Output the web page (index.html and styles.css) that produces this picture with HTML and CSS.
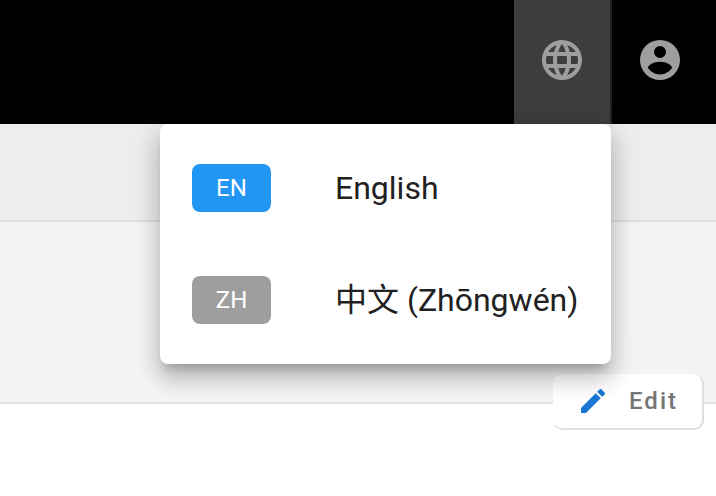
FILE: index.html
```html
<!DOCTYPE html>
<html lang="en">
  <head>
    <meta charset="UTF-8" />
    <meta name="viewport" content="width=device-width, initial-scale=1.0" />
    <title>Language menu</title>
    <link rel="stylesheet" href="styles.css">
  </head>
  <body>
    <header class="app-bar">
      <button type="button" class="bar-button active" aria-label="Language" aria-expanded="true">
        <svg class="bar-icon" viewBox="0 0 24 24">
          <path d="M16.36 14c.08-.66.14-1.32.14-2s-.06-1.34-.14-2h3.38c.16.64.26 1.31.26 2s-.1 1.36-.26 2m-5.15 5.56c.6-1.11 1.06-2.31 1.38-3.56h2.95a8.03 8.03 0 0 1-4.33 3.56M14.34 14H9.66c-.1-.66-.16-1.32-.16-2s.06-1.35.16-2h4.68c.09.65.16 1.32.16 2s-.07 1.34-.16 2M12 19.96c-.83-1.2-1.5-2.53-1.91-3.96h3.82c-.41 1.43-1.08 2.76-1.91 3.96M8 8H5.08A7.92 7.92 0 0 1 9.4 4.44C8.8 5.55 8.35 6.75 8 8m-2.92 8H8c.35 1.25.8 2.45 1.4 3.56A8 8 0 0 1 5.08 16m-.82-2C4.1 13.36 4 12.69 4 12s.1-1.36.26-2h3.38c-.08.66-.14 1.32-.14 2s.06 1.34.14 2M12 4.03c.83 1.2 1.5 2.54 1.91 3.97h-3.82c.41-1.43 1.08-2.77 1.91-3.97M18.92 8h-2.95a15.7 15.7 0 0 0-1.38-3.56c1.84.63 3.37 1.9 4.33 3.56M12 2C6.47 2 2 6.5 2 12a10 10 0 0 0 10 10 10 10 0 0 0 10-10A10 10 0 0 0 12 2" />
        </svg>
      </button>
      <button type="button" class="bar-button" aria-label="Account">
        <svg class="bar-icon" viewBox="0 0 24 24">
          <path fill-rule="evenodd" d="M12 2a10 10 0 1 0 0 20 10 10 0 0 0 0-20M12 5a3 3 0 1 1 0 6 3 3 0 0 1 0-6M12 12.9c3.3 0 6 1.6 6 3.1-1.3 1.9-3.5 3.2-6 3.2S7.3 17.9 6 16c0-1.5 2.7-3.1 6-3.1" />
        </svg>
      </button>
      <ul class="language-menu">
        <li>
          <button type="button" class="language">
            <span class="chip selected">EN</span>
            <span>English</span>
          </button>
        </li>
        <li>
          <button type="button" class="language">
            <span class="chip">ZH</span>
            <span lang="zh">中文 (Zhōngwén)</span>
          </button>
        </li>
      </ul>
    </header>
    <div class="sub-bar"></div>
    <main class="panel">
      <button type="button" class="edit-button">
        <svg class="edit-icon" viewBox="0 0 24 24">
          <path d="M20.71 7.04c.39-.39.39-1.04 0-1.41l-2.34-2.34c-.37-.39-1.02-.39-1.41 0l-1.84 1.83 3.75 3.75M3 17.25V21h3.75L17.81 9.93l-3.75-3.75z" />
        </svg>
        Edit
      </button>
    </main>
  </body>
</html>
```

FILE: styles.css
```css
body {
  min-height: 100vh;
  margin: 0;
  background: #fff;
  font-family: Roboto, "Noto Sans CJK SC", sans-serif;
}

button {
  border: 0;
  cursor: pointer;
  font-family: inherit;
}

.app-bar {
  position: relative;
  z-index: 2;
  display: flex;
  justify-content: flex-end;
  height: 124px;
  padding-right: 8px;
  background: #000;
}

.bar-button {
  box-sizing: content-box;
  display: flex;
  align-items: center;
  justify-content: center;
  width: 96px;
  padding: 0 0 4px;
  height: 120px;
  background: none;
}

.bar-button.active {
  background: #3d3d3d;
  border-right: 2px solid #222;
}

.bar-icon {
  width: 48px;
  height: 48px;
  fill: #9e9e9e;
}

.language-menu {
  position: absolute;
  top: 100%;
  right: 105px;
  min-width: 451px;
  margin: 0;
  padding: 8px 0;
  list-style: none;
  background: #fff;
  border-radius: 8px;
  box-shadow:
    0 10px 10px -6px rgba(0, 0, 0, 0.2),
    0 16px 20px 2px rgba(0, 0, 0, 0.14),
    0 6px 28px 4px rgba(0, 0, 0, 0.12);
}

.language {
  display: flex;
  align-items: center;
  gap: 64px;
  width: 100%;
  height: 112px;
  padding: 0 32px;
  background: none;
  color: #212121;
  font-size: 32px;
  line-height: 40px;
  white-space: nowrap;
}

.chip {
  width: 79px;
  border-radius: 8px;
  background: #9e9e9e;
  color: #fff;
  font-size: 24px;
  line-height: 48px;
  text-align: center;
}

.chip.selected {
  background: #2196f3;
}

.sub-bar {
  height: 96px;
  background: #eceeee;
  border-bottom: 2px solid #dfdfdf;
}

.panel {
  position: relative;
  height: 180px;
  background: #f4f4f4;
  border-bottom: 2px solid #dfdfdf;
}

/* sits across the bottom edge of the panel */
.edit-button {
  position: absolute;
  right: 12px;
  bottom: -28px;
  display: flex;
  align-items: center;
  gap: 20px;
  height: 56px;
  padding: 0 24px;
  border: solid #dedede;
  border-width: 0 2px 2px 0;
  border-radius: 10px;
  background: #fff;
  color: #757575;
  font-size: 24px;
  font-weight: 500;
  letter-spacing: 2px;
}

.edit-icon {
  width: 32px;
  height: 32px;
  fill: #1976d2;
}
```
